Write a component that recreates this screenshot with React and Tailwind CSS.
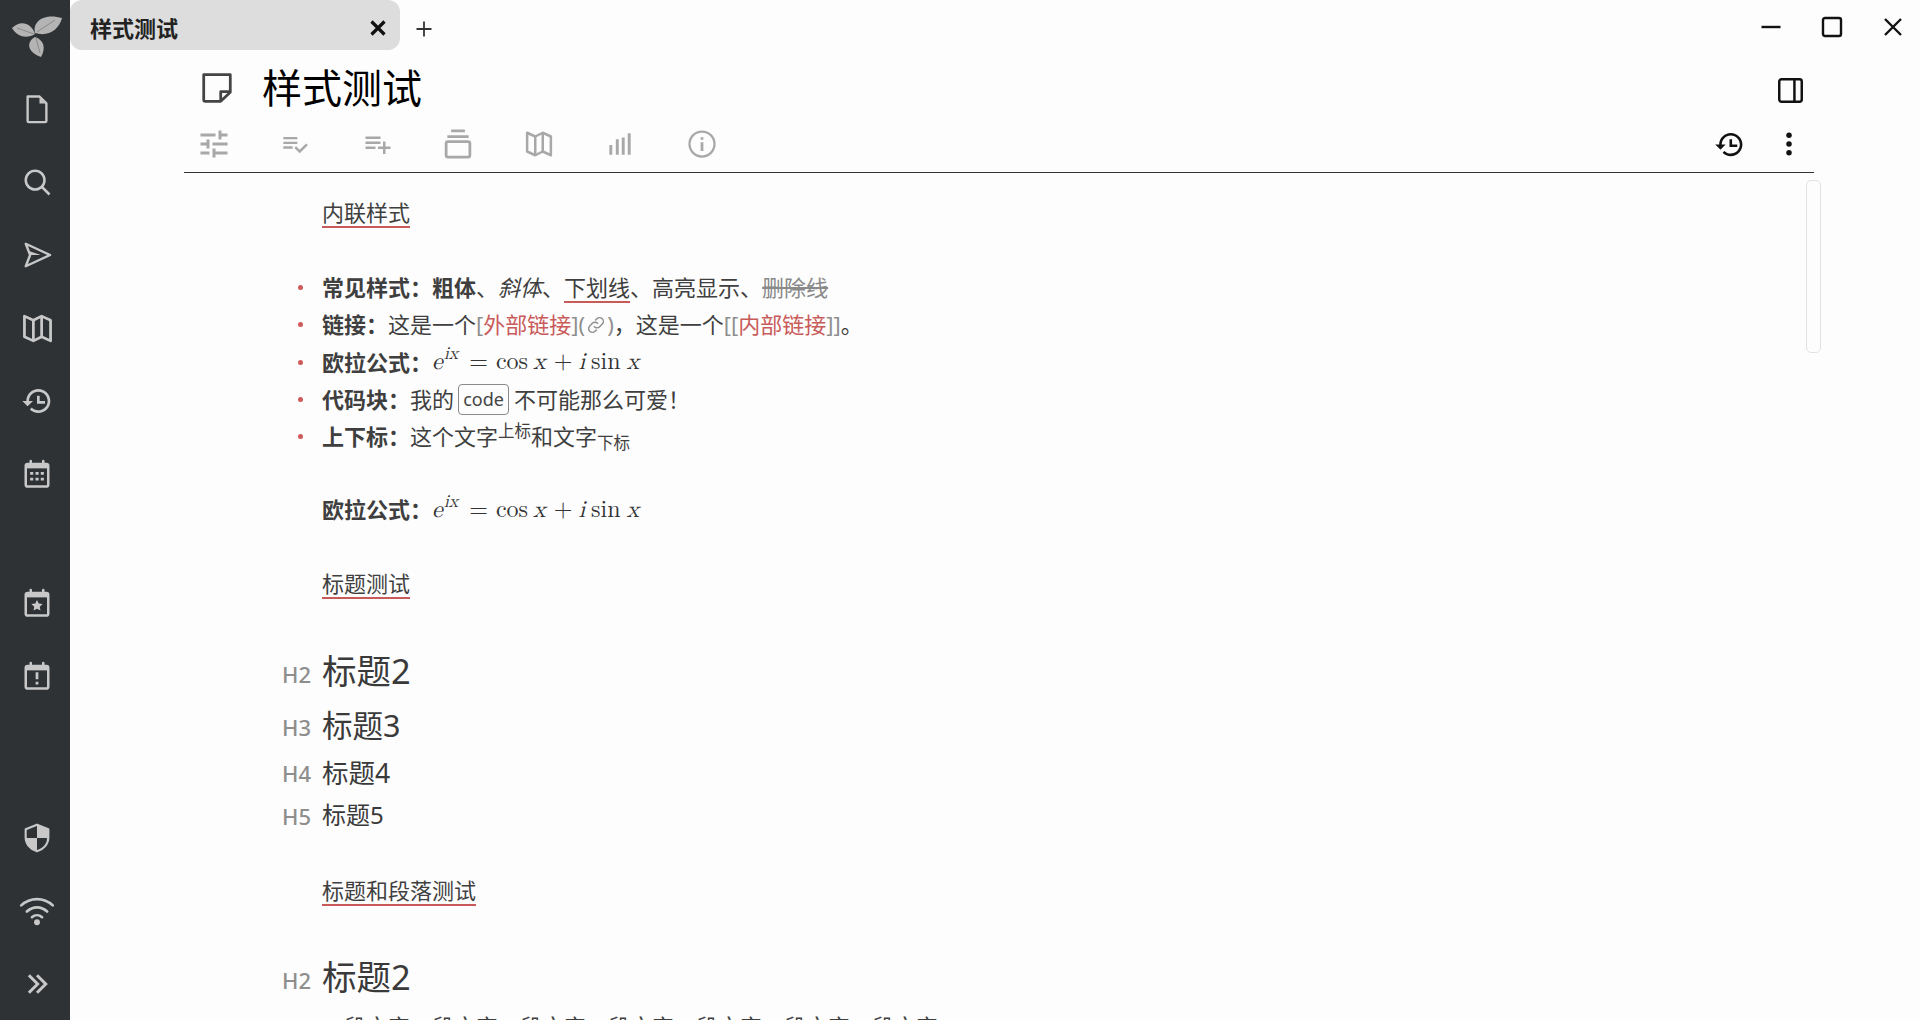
import React from 'react';

const Icon = ({ className, children, fill = 'none', stroke = 'currentColor', sw = 2 }) => (
  <svg viewBox="0 0 24 24" fill={fill} stroke={stroke} strokeWidth={sw} className={className}>
    {children}
  </svg>
);

const Logo = () => (
  <svg viewBox="0 0 70 70" className="w-[70px] h-[70px] text-[#b4b4b4]" fill="currentColor">
    <path d="M35 34C31 22 20 20 12 28C17 37 27 39 35 34Z" />
    <path d="M35 33C32 20 46 13 62 18C59 30 48 37 35 33Z" />
    <path d="M35 37C26 42 27 52 41 57C46 48 44 40 35 37Z" />
    <path d="M17 28L34 34M37 32L55 20M36 38L40 53" fill="none" stroke="#8a8a8a" strokeWidth="1" />
  </svg>
);

const sideIcon = 'w-[30px] h-[30px]';

const SideFile = () => (
  <Icon className={sideIcon} sw={1.9}>
    <path d="M4.500 2h9.500l5.500 5.500v14a1 1 0 0 1-1 1H5.500a1 1 0 0 1-1-1z" strokeLinejoin="round" />
    <path d="M14 3v4.500h4.500z" fill="currentColor" stroke="none" />
  </Icon>
);
const SideSearch = () => (
  <Icon className={sideIcon} sw={2}>
    <circle cx="10.500" cy="10.500" r="7.500" />
    <path d="M16 16l6 6" />
  </Icon>
);
const SideSend = () => (
  <Icon className="w-[30px] h-[30px]" sw={1.900}>
    <path d="M3 3l19.500 9L3 21l3.500-9z" strokeLinejoin="round" />
    <path d="M6.500 12H15L5 8.500z" fill="currentColor" stroke="none" />
  </Icon>
);
const MapGlyph = ({ className, sw = 2 }) => (
  <Icon className={className} sw={sw}>
    <path d="M2.500 3l6.500 3 6-3 6.500 3v15l-6.500-3-6 3-6.500-3z" strokeLinejoin="round" />
    <path d="M9 6v15M15 3v15" />
  </Icon>
);
const HistoryGlyph = ({ className }) => (
  <Icon className={className} sw={0} fill="currentColor" stroke="none">
    <path d="M13 3c-4.970 0-9 4.030-9 9H1l3.890 3.890.07.14L9 12H6c0-3.870 3.130-7 7-7s7 3.130 7 7-3.130 7-7 7c-1.930 0-3.680-.79-4.940-2.060l-1.420 1.420C8.270 19.990 10.510 21 13 21c4.970 0 9-4.030 9-9s-4.030-9-9-9z" />
    <path d="M12 8h2v4h4v2h-6z" />
  </Icon>
);
const CalBody = ({ children }) => (
  <Icon className={sideIcon} sw={2}>
    <path d="M7 1.500v3M17 1.500v3" strokeLinecap="round" />
    <rect x="3" y="4" width="18" height="18" rx="1.500" />
    <path d="M3 6h18" strokeWidth="3" />
    {children}
  </Icon>
);
const SideCalendar = () => (
  <CalBody>
    <path d="M6.500 11.500h2.500M10.800 11.500h2.500M15 11.500h2.500M6.500 16h2.500M10.800 16h2.500M15 16h2.500" strokeWidth="2.200" />
  </CalBody>
);
const SideCalStar = () => (
  <CalBody>
    <path d="M12 9.500l1.400 2.900 3.100.4-2.300 2.100.6 3.100-2.800-1.500-2.800 1.500.6-3.100-2.300-2.100 3.100-.4z" fill="currentColor" stroke="none" />
  </CalBody>
);
const SideCalAlert = () => (
  <CalBody>
    <path d="M12 9v5.500M12 16.500v2.200" strokeWidth="2.200" />
  </CalBody>
);
const SideShield = () => (
  <Icon className="w-[32px] h-[32px]" sw={1.600}>
    <path d="M12 2L3.500 5.500v6c0 5 3.500 9 8.500 10.500 5-1.500 8.500-5.500 8.500-10.500v-6z" strokeLinejoin="round" />
    <path d="M12 2l8.500 3.500V12H12zM3.500 12H12v10c-5-1.500-8.500-5.500-8.500-10z" fill="currentColor" stroke="none" />
  </Icon>
);
const SideWifi = () => (
  <svg viewBox="0 0 32 28" className="w-[36px] h-[32px]" fill="none" stroke="currentColor" strokeWidth="2.400" strokeLinecap="round">
    <path d="M2 9c8-7.500 20-7.500 28 0M7 14.500c5.200-5 12.800-5 18 0M11.500 19.500c2.600-2.300 6.400-2.300 9 0" />
    <circle cx="16" cy="24" r="2.600" fill="currentColor" stroke="none" />
  </svg>
);
const SideChevrons = () => (
  <Icon className={sideIcon} sw={2.400}>
    <path d="M5.500 5l7 7-7 7M12 5l7 7-7 7" />
  </Icon>
);

const SideItem = ({ children }) => (
  <div className="h-[73px] pl-[4px] flex items-center justify-center">{children}</div>
);

const Sidebar = () => (
  <aside className="w-[70px] h-full shrink-0 bg-[#2e3235] text-[#c8c8c8] flex flex-col">
    <Logo />
    <div className="mt-[2.500px]">
      <SideItem><SideFile /></SideItem>
      <SideItem><SideSearch /></SideItem>
      <SideItem><SideSend /></SideItem>
      <SideItem><MapGlyph className="w-[33px] h-[33px]" /></SideItem>
      <SideItem><HistoryGlyph className="w-[32px] h-[32px]" /></SideItem>
      <SideItem><SideCalendar /></SideItem>
    </div>
    <div className="mt-[55.500px]">
      <SideItem><SideCalStar /></SideItem>
      <SideItem><SideCalAlert /></SideItem>
    </div>
    <div className="mt-auto">
      <SideItem><SideShield /></SideItem>
      <SideItem><SideWifi /></SideItem>
      <SideItem><SideChevrons /></SideItem>
    </div>
  </aside>
);

const TabBar = () => (
  <div className="h-[50px] flex items-center shrink-0">
    <div className="w-[330px] h-[50px] bg-[#dddddd] rounded-[12px] flex items-center justify-between pl-[20px] pr-[10px] pt-[6px]">
      <span className="text-[22px] font-bold text-[#222222] leading-none -mt-[1px]">样式测试</span>
      <svg viewBox="0 0 24 24" className="w-[24px] h-[24px] text-[#111111]" fill="none" stroke="currentColor" strokeWidth="3.200">
        <path d="M5.500 5.500l13 13M18.500 5.500l-13 13" />
      </svg>
    </div>
    <svg viewBox="0 0 24 24" className="ml-[12px] mt-[8px] w-[24px] h-[24px] text-[#333333]" fill="none" stroke="currentColor" strokeWidth="1.800">
      <path d="M12 4.500v15M4.500 12h15" />
    </svg>
    <div className="ml-auto flex pr-[2px] gap-[11px] pt-[4px]">
      <div className="w-[50px] flex justify-center">
        <svg viewBox="0 0 24 24" className="w-[24px] h-[24px]" fill="none" stroke="#111111" strokeWidth="2.400"><path d="M2.500 12h19" /></svg>
      </div>
      <div className="w-[50px] flex justify-center">
        <svg viewBox="0 0 24 24" className="w-[24px] h-[24px]" fill="none" stroke="#111111" strokeWidth="2.400"><rect x="3" y="3" width="18" height="18" rx="2" /></svg>
      </div>
      <div className="w-[50px] flex justify-center">
        <svg viewBox="0 0 24 24" className="w-[24px] h-[24px]" fill="none" stroke="#111111" strokeWidth="2.400"><path d="M4 4l16 16M20 4L4 20" /></svg>
      </div>
    </div>
  </div>
);

const TitleRow = () => (
  <div className="h-[70px] pt-[6px] flex items-center shrink-0">
    <svg viewBox="0 0 32 32" className="ml-[16px] w-[34px] h-[34px] text-[#444444]" fill="none" stroke="currentColor" strokeWidth="2.600" strokeLinejoin="round">
      <path d="M3.500 3.500h25v16.500l-9 8.500H4.500a1 1 0 0 1-1-1z" />
      <path d="M19.500 28v-8.500h9" />
    </svg>
    <h1 className="ml-[28px] text-[40px] font-normal text-black leading-none">样式测试</h1>
    <div className="ml-auto w-[50px] flex justify-center mt-[4px] translate-x-[1px]">
      <svg viewBox="0 0 24 24" className="w-[27px] h-[27px]" fill="none" stroke="#111111" strokeWidth="2.200">
        <rect x="2" y="2" width="20" height="20" rx="2" />
        <path d="M15.500 2v20" />
      </svg>
    </div>
  </div>
);

const toolIcon = 'text-[#a8a8a8]';

const ToolCell = ({ children }) => (
  <div className="w-[60px] flex items-center justify-center">{children}</div>
);

const Toolbar = () => (
  <div className="h-[53px] pb-[4px] flex items-center border-b border-[#333333] shrink-0">
    <div className="flex gap-[21.300px]">
      <ToolCell>
        <Icon className={`w-[36px] h-[36px] ${toolIcon}`} fill="currentColor" stroke="none">
          <path d="M3 17v2h6v-2H3zM3 5v2h10V5H3zm10 16v-2h8v-2h-8v-2h-2v6h2zM7 9v2H3v2h4v2h2V9H7zm14 4v-2H11v2h10zm-6-4h2V7h4V5h-4V3h-2v6z" />
        </Icon>
      </ToolCell>
      <ToolCell>
        <Icon className={`w-[28px] h-[28px] ${toolIcon}`} fill="currentColor" stroke="none">
          <path d="M14 10H2v2h12v-2zm0-4H2v2h12V6zM2 16h8v-2H2v2zm19.500-4.500L23 13l-6.990 7-4.510-4.500L13 14l3.010 3 5.490-5.500z" />
        </Icon>
      </ToolCell>
      <ToolCell>
        <Icon className={`w-[30px] h-[30px] translate-x-[1px] ${toolIcon}`} fill="currentColor" stroke="none">
          <path d="M14 10H2v2h12v-2zm0-4H2v2h12V6zm4 8v-4h-2v4h-4v2h4v4h2v-4h4v-2h-4zM2 16h8v-2H2v2z" />
        </Icon>
      </ToolCell>
      <ToolCell>
        <Icon className={`w-[30px] h-[30px] ${toolIcon}`} sw={2.200}>
          <path d="M6.500 1.500h11M3.500 6h17" />
          <rect x="2.500" y="10" width="19" height="12.500" rx="1.500" />
        </Icon>
      </ToolCell>
      <ToolCell>
        <MapGlyph className={`w-[30px] h-[30px] ${toolIcon}`} />
      </ToolCell>
      <ToolCell>
        <Icon className={`w-[26px] h-[26px] ${toolIcon}`} sw={2.700}>
          <path d="M3.500 22v-9M9.500 22V7.500M15 22V6M20.500 22V2" />
        </Icon>
      </ToolCell>
      <ToolCell>
        <Icon className={`w-[30px] h-[30px] ${toolIcon}`} sw={1.800}>
          <circle cx="12" cy="12" r="10" />
          <path d="M12 10.500v7M12 6.500v2" strokeWidth="2.200" />
        </Icon>
      </ToolCell>
    </div>
    <div className="ml-auto flex gap-[10px] text-[#111111]">
      <div className="w-[50px] flex justify-center">
        <HistoryGlyph className="w-[31px] h-[31px]" />
      </div>
      <div className="w-[50px] flex justify-center">
        <svg viewBox="0 0 24 24" className="w-[30px] h-[30px]" fill="currentColor">
          <circle cx="12" cy="5" r="2.200" />
          <circle cx="12" cy="12" r="2.200" />
          <circle cx="12" cy="19" r="2.200" />
        </svg>
      </div>
    </div>
  </div>
);

const SectionLink = ({ children, className = '' }) => (
  <div className={`flex items-center h-[37px] pl-[138px] ${className}`}>
    <span className="underline decoration-[#c95a5a] decoration-2 underline-offset-[5px]">{children}</span>
  </div>
);

const Bullet = ({ children }) => (
  <div className="flex items-center h-[37.300px]">
    <div className="w-[138px] flex justify-end pr-[19px]">
      <span className="w-[5px] h-[5px] rounded-full bg-[#cf5a5a]" />
    </div>
    <div className="flex items-center whitespace-pre">{children}</div>
  </div>
);

const Mi = ({ children, className = '' }) => <i className={`italic ${className}`}>{children}</i>;

// inline formula, spaced by hand to follow the typeset one
const Formula = () => (
  <span className="inline-flex items-baseline font-['Latin_Modern_Math','Liberation_Serif',serif] text-[24px] leading-none text-[#333333]">
    <Mi>e</Mi>
    <span className="relative -top-[10px] text-[18px] italic ml-[1px]">ix</span>
    <span className="ml-[11px]">=</span>
    <span className="ml-[8px]">cos</span>
    <Mi className="ml-[5px]">x</Mi>
    <span className="ml-[8px]">+</span>
    <Mi className="ml-[6px]">i</Mi>
    <span className="ml-[6px]">sin</span>
    <Mi className="ml-[6px]">x</Mi>
  </span>
);

const Heading = ({ label, className, labelClass = 'pt-[6px]', children }) => (
  <div className={`flex items-center ${className}`}>
    <div className={`w-[138px] flex justify-end pr-[11px] text-[22px] font-medium text-[#8e8e8e] leading-none ${labelClass}`}>{label}</div>
    <div className="leading-none text-[#3a3a3a]">{children}</div>
  </div>
);

const Content = () => (
  <div className="flex-1 min-h-0 overflow-hidden pt-[21px] text-[22px] text-[#3f3f3f]">
    <SectionLink>内联样式</SectionLink>

    <div className="mt-[38px]">
      <Bullet>
        <b>常见样式：粗体</b>
        <span>、</span>
        <span className="italic">斜体</span>
        <span>、</span>
        <span className="underline decoration-[#c95a5a] decoration-2 underline-offset-[5px]">下划线</span>
        <span>、高亮显示、</span>
        <span className="line-through text-[#8a8a8a]">删除线</span>
      </Bullet>
      <Bullet>
        <b>链接：</b>
        <span>这是一个</span>
        <span className="text-[#8f8f8f]">[</span>
        <span className="text-[#c95a5a]">外部链接</span>
        <span className="text-[#8f8f8f]">]</span>
        <span className="text-[#8f8f8f] flex items-center">
          (
          <svg viewBox="0 0 24 24" className="w-[20px] h-[20px] mx-[1px]" fill="none" stroke="currentColor" strokeWidth="1.800" strokeLinecap="round">
            <path d="M10 14a4.500 4.500 0 0 0 6.400 0l3.100-3.100a4.500 4.500 0 0 0-6.400-6.400l-1.500 1.500" />
            <path d="M14 10a4.500 4.500 0 0 0-6.400 0l-3.100 3.100a4.500 4.500 0 0 0 6.400 6.400l1.500-1.500" />
          </svg>
          )
        </span>
        <span>，这是一个</span>
        <span className="text-[#8f8f8f]">[[</span>
        <span className="text-[#c95a5a]">内部链接</span>
        <span className="text-[#8f8f8f]">]]</span>
        <span>。</span>
      </Bullet>
      <Bullet>
        <b>欧拉公式：</b>
        <Formula />
      </Bullet>
      <Bullet>
        <b>代码块：</b>
        <span>我的</span>
        <code className="ml-[4px] mr-[5px] w-[51px] h-[31px] flex items-center justify-center border border-[#8a8a8a] rounded-[4px] text-[18px] font-['Noto_Sans',sans-serif] text-[#444444]">code</code>
        <span>不可能那么可爱！</span>
      </Bullet>
      <Bullet>
        <b>上下标：</b>
        <span>这个文字<sup>上标</sup>和文字<sub>下标</sub></span>
      </Bullet>
    </div>

    <div className="mt-[36px] flex items-center h-[37px] pl-[138px] whitespace-pre">
      <b>欧拉公式：</b>
      <Formula />
    </div>

    <SectionLink className="mt-[37px]">标题测试</SectionLink>

    <Heading label="H2" className="mt-[41.500px] h-[54px] text-[34.500px]">标题2</Heading>
    <Heading label="H3" labelClass="pt-[3.500px]" className="mt-[4px] h-[46px] text-[30.500px]">标题3</Heading>
    <Heading label="H4" labelClass="pt-[1px]" className="mt-[5px] h-[40px] text-[26.500px]">标题4</Heading>
    <Heading label="H5" labelClass="pt-[1px]" className="mt-[4px] h-[37px] text-[24px]">标题5</Heading>

    <SectionLink className="mt-[38px]">标题和段落测试</SectionLink>

    <Heading label="H2" className="mt-[41px] h-[54px] text-[34.500px]">标题2</Heading>
    <p className="mt-[4px] pl-[138px] leading-[37px] whitespace-pre">
      一段文字一段文字一段文字一段文字一段文字一段文字一段文字
    </p>
  </div>
);

export default function App() {
  return (
    <div className="w-[1920px] h-[1020px] overflow-hidden flex bg-[#fdfdfd] font-['Noto_Sans','Noto_Sans_CJK_SC',sans-serif]">
      <Sidebar />
      <main className="relative flex-1 min-w-0 flex flex-col">
        <TabBar />
        <div className="flex-1 min-h-0 flex flex-col ml-[114px] mr-[106px]">
          <TitleRow />
          <Toolbar />
          <Content />
        </div>
        {/* scrollbar thumb sits over the document */}
        <div className="absolute left-[1736px] top-[180px] w-[15px] h-[173px] rounded-[5px] border border-[#e2e2e2]" />
      </main>
    </div>
  );
}
